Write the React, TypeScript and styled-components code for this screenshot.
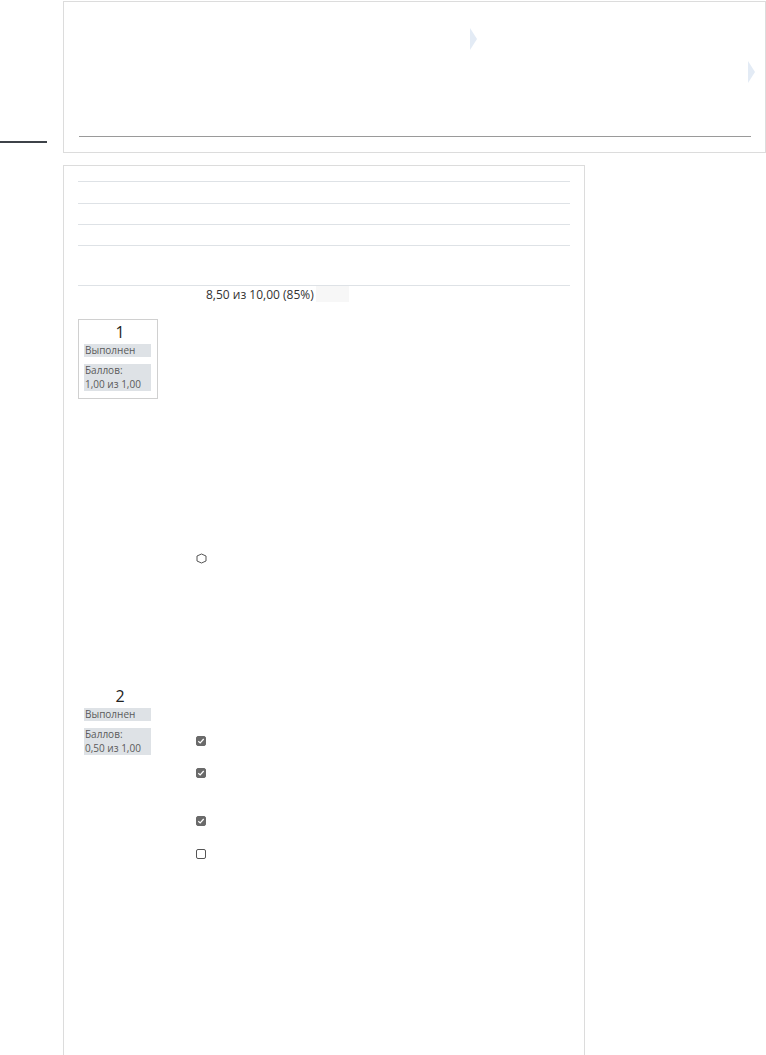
import React from "react";
import styled, { createGlobalStyle } from "styled-components";

const Global = createGlobalStyle`
  html, body { margin: 0; padding: 0; background: #fff; }
  body { font-family: "Open Sans", "Noto Sans", sans-serif; color: #333; }
`;

const Page = styled.div`
  display: flex;
  align-items: flex-start;
  width: 766px;
  min-height: 1055px;
  overflow: hidden;
`;

const Side = styled.div`
  width: 47px;
  flex: none;
  padding-top: 141px;
  margin-right: 16px;
`;

const SideLine = styled.div`
  height: 2px;
  background: #3d4248;
`;

const Main = styled.div`
  display: flex;
  flex-direction: column;
  padding-top: 1px;
`;

const TopCard = styled.div`
  box-sizing: border-box;
  width: 703px;
  height: 152px;
  border: 1px solid #dcdcdc;
  position: relative;
  padding: 134px 14px 0 15px;
`;

const Chevron = styled.div<{ $x: number; $y: number }>`
  position: absolute;
  left: ${(p) => p.$x}px;
  top: ${(p) => p.$y}px;
  width: 0;
  height: 0;
  border-top: 11px solid transparent;
  border-bottom: 11px solid transparent;
  border-left: 7px solid #e3ebf5;
`;

const TopRule = styled.div`
  height: 1px;
  background: #9a9a9a;
`;

const Card = styled.div`
  box-sizing: border-box;
  width: 522px;
  min-height: 900px;
  margin-top: 12px;
  border: 1px solid #dcdcdc;
  padding: 15px 14px 0 14px;
`;

const Row = styled.div<{ $h: number }>`
  height: ${(p) => p.$h}px;
  border-top: 1px solid #dee2e6;
  box-sizing: border-box;
`;

const ScoreRow = styled.div`
  display: flex;
  align-items: flex-start;
  border-top: 1px solid #dee2e6;
  padding-left: 128px;
  height: 33px;
`;

const ScoreCell = styled.div`
  font-size: 12px;
  line-height: 15px;
  height: 15px;
  padding-top: 1px;
  width: 143px;
  background: linear-gradient(to right, #fff 0 110px, #f7f7f7 110px);
  color: #333;
`;

const Question = styled.div<{ $h: number }>`
  display: flex;
  height: ${(p) => p.$h}px;
`;

const Info = styled.div<{ $boxed?: boolean }>`
  box-sizing: border-box;
  width: 80px;
  height: 80px;
  border: 1px solid ${(p) => (p.$boxed ? "#d0d0d0" : "transparent")};
  padding: 2px 6px 0 5px;
  display: flex;
  flex-direction: column;
  flex: none;
`;

const QNo = styled.div`
  text-align: center;
  font-size: 16px;
  line-height: 21px;
  color: #222;
  height: 23px;
  padding-left: 5px;
`;

const Tag = styled.div`
  background: #dee2e6;
  font-size: 10px;
  line-height: 13.5px;
  color: #5a5a5a;
  padding-left: 1px;
  margin-bottom: 7px;
`;

const Content = styled.div<{ $top: number }>`
  padding-left: 38px;
  padding-top: ${(p) => p.$top}px;
  display: flex;
  flex-direction: column;
`;

const Opt = styled.div<{ $h: number }>`
  height: ${(p) => p.$h}px;
  display: flex;
  align-items: flex-start;
`;

const Box = styled.div<{ $checked?: boolean }>`
  box-sizing: border-box;
  width: 10px;
  height: 10px;
  border-radius: 2px;
  border: 1px solid ${(p) => (p.$checked ? "#6a6a6a" : "#555")};
  background: ${(p) => (p.$checked ? "#6a6a6a" : "#fff")};
  display: flex;
  align-items: center;
  justify-content: center;
`;

const Hex = () => (
  <svg width="11" height="11" viewBox="0 0 11 11">
    <polygon points="3,1 8,1 10,5.5 8,10 3,10 1,5.5" fill="#fff" stroke="#555" strokeWidth="1" transform="rotate(90 5.5 5.5)" />
  </svg>
);

const Check = () => (
  <svg width="8" height="8" viewBox="0 0 8 8">
    <path d="M1.3 4.2 L3.2 6 L6.7 2" fill="none" stroke="#fff" strokeWidth="1.2" />
  </svg>
);

export default function App() {
  return (
    <>
      <Global />
      <Page>
        <Side>
          <SideLine />
        </Side>
        <Main>
          <TopCard>
            <Chevron $x={406} $y={26} />
            <Chevron $x={684} $y={59} />
            <TopRule />
          </TopCard>
          <Card>
            <Row $h={22} />
            <Row $h={21} />
            <Row $h={21} />
            <Row $h={40} />
            <ScoreRow>
              <ScoreCell>8,50 из 10,00 (85%)</ScoreCell>
            </ScoreRow>
            <Question $h={364}>
              <Info $boxed>
                <QNo>1</QNo>
                <Tag>Выполнен</Tag>
                <Tag>
                  Баллов:
                  <br />
                  1,00 из 1,00
                </Tag>
              </Info>
              <Content $top={234}>
                <Opt $h={12}>
                  <Hex />
                </Opt>
              </Content>
            </Question>
            <Question $h={200}>
              <Info>
                <QNo>2</QNo>
                <Tag>Выполнен</Tag>
                <Tag>
                  Баллов:
                  <br />
                  0,50 из 1,00
                </Tag>
              </Info>
              <Content $top={53}>
                <Opt $h={32}>
                  <Box $checked>
                    <Check />
                  </Box>
                </Opt>
                <Opt $h={48}>
                  <Box $checked>
                    <Check />
                  </Box>
                </Opt>
                <Opt $h={33}>
                  <Box $checked>
                    <Check />
                  </Box>
                </Opt>
                <Opt $h={12}>
                  <Box />
                </Opt>
              </Content>
            </Question>
          </Card>
        </Main>
      </Page>
    </>
  );
}
